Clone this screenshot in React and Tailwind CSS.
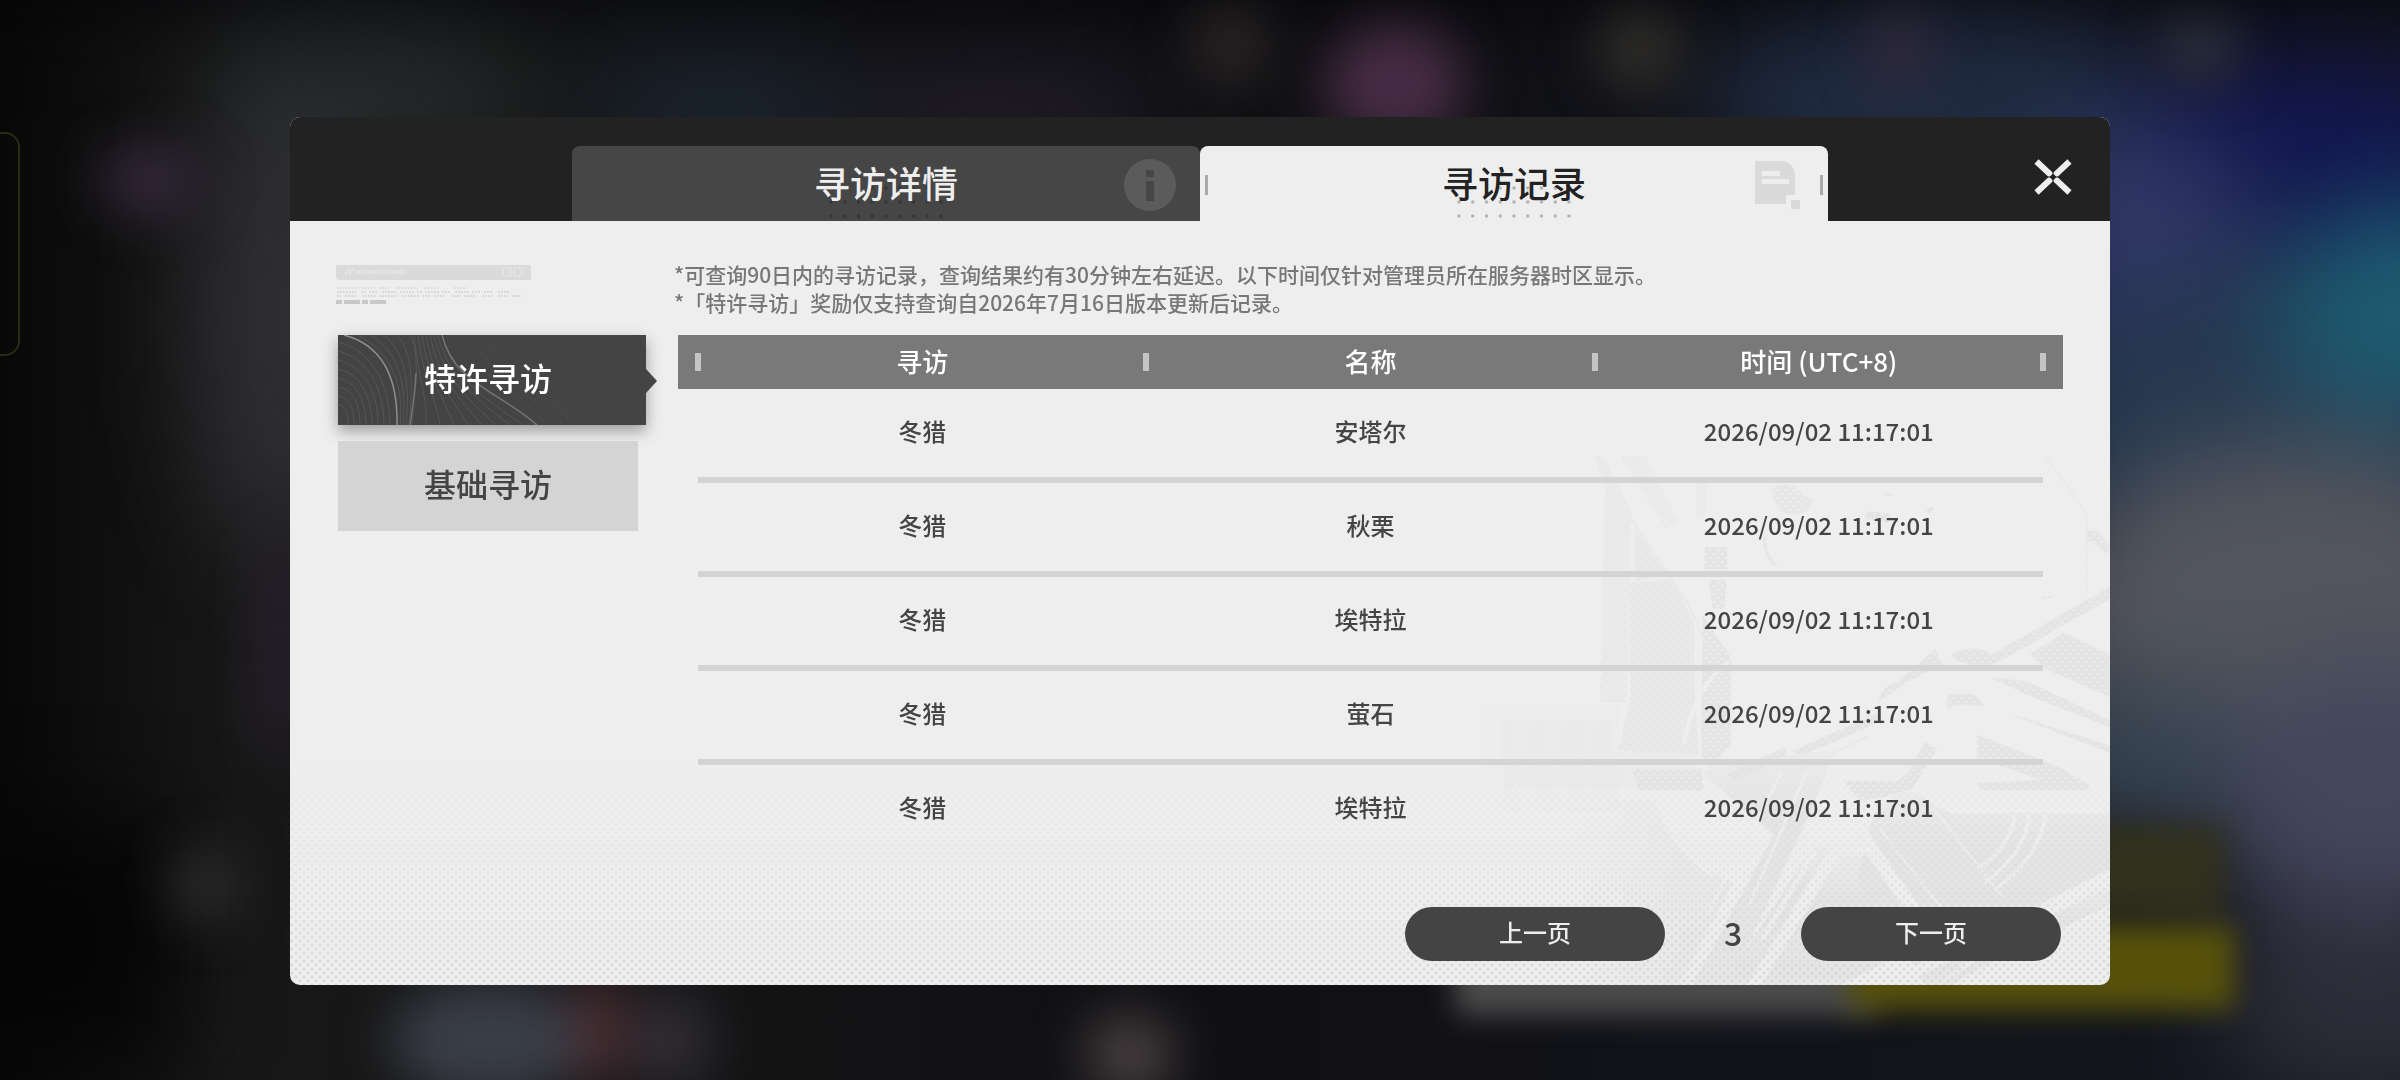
import React, { useState } from 'react';

const records = [
  { id: 1, banner: '冬猎', name: '安塔尔', time: '2026/09/02 11:17:01' },
  { id: 2, banner: '冬猎', name: '秋栗', time: '2026/09/02 11:17:01' },
  { id: 3, banner: '冬猎', name: '埃特拉', time: '2026/09/02 11:17:01' },
  { id: 4, banner: '冬猎', name: '萤石', time: '2026/09/02 11:17:01' },
  { id: 5, banner: '冬猎', name: '埃特拉', time: '2026/09/02 11:17:01' },
];

const columns = ['寻访', '名称', '时间 (UTC+8)'];

// blurred scene behind the dialog, each entry is cx, cy, rx, ry, color
const wideLights = [
  [370, 95, 160, 80, '#232828'],
  [285, 320, 90, 240, '#2e2e33'],
  [720, 110, 140, 60, '#1a242e'],
  [1000, 120, 160, 50, '#221d2a'],
  [1940, 100, 240, 90, '#202c42'],
  [2290, 150, 200, 90, '#121650'],
  [2140, 240, 120, 120, '#2f3663'],
  [2250, 420, 220, 140, '#26384f'],
  [2410, 310, 140, 110, '#1d5a70'],
  [2300, 610, 260, 170, '#52555d'],
  [2150, 760, 120, 80, '#364350'],
  [2370, 800, 150, 140, '#44475c'],
  [2370, 1000, 150, 100, '#2c2d39'],
];

const smallLights = [
  [150, 180, 50, 34, '#34293c'],
  [1230, 45, 40, 40, '#2a2525'],
  [1395, 85, 70, 60, '#472c45'],
  [1640, 50, 44, 40, '#302e2a'],
  [1900, 50, 30, 40, '#33293a'],
  [2200, 50, 40, 30, '#30333c'],
  [280, 650, 14, 110, '#33263b'],
  [205, 885, 30, 36, '#303030'],
  [490, 1040, 100, 60, '#3a3e48'],
  [600, 1030, 24, 60, '#4c2c30'],
  [670, 1040, 40, 50, '#312e35'],
  [1130, 1055, 44, 40, '#4a4244'],
];

const Backdrop = () => (
  <svg
    className="absolute inset-0 h-full w-full"
    viewBox="0 0 2400 1080"
    preserveAspectRatio="none"
    aria-hidden="true"
  >
    <defs>
      <filter id="wide" x="-20%" y="-20%" width="140%" height="140%" colorInterpolationFilters="sRGB">
        <feGaussianBlur stdDeviation="48" />
      </filter>
      <filter id="haze" x="-20%" y="-20%" width="140%" height="140%" colorInterpolationFilters="sRGB">
        <feGaussianBlur stdDeviation="26" />
      </filter>
      <filter id="glow" x="-20%" y="-60%" width="140%" height="220%" colorInterpolationFilters="sRGB">
        <feGaussianBlur stdDeviation="14" />
      </filter>
      <linearGradient id="night" x1="0" x2="1" y1="0" y2="0">
        <stop offset="0" stopColor="#080808" />
        <stop offset="0.1" stopColor="#181818" />
        <stop offset="0.5" stopColor="#101013" />
        <stop offset="1" stopColor="#141720" />
      </linearGradient>
    </defs>
    <rect width="2400" height="1080" fill="url(#night)" />
    <g filter="url(#wide)">
      <rect x="-100" y="820" width="270" height="240" fill="#050505" />
      {wideLights.map(([cx, cy, rx, ry, color]) => (
        <ellipse key={`${cx}-${cy}`} cx={cx} cy={cy} rx={rx} ry={ry} fill={color} />
      ))}
      <rect x="-200" y="-100" width="2800" height="100" fill="#040407" />
    </g>
    <g filter="url(#haze)">
      {smallLights.map(([cx, cy, rx, ry, color]) => (
        <ellipse key={`${cx}-${cy}`} cx={cx} cy={cy} rx={rx} ry={ry} fill={color} />
      ))}
    </g>
    <rect x="1455" y="950" width="420" height="65" fill="#4c4c4c" filter="url(#glow)" />
    <rect x="2080" y="825" width="145" height="90" fill="#32311e" filter="url(#glow)" />
    <rect x="1850" y="925" width="385" height="85" fill="#57520b" filter="url(#glow)" />
    <rect x="-60" y="133" width="79" height="222" rx="14" fill="none" stroke="#2b2a14" strokeWidth="2" />
  </svg>
);

const InfoIcon = () => (
  <svg width="52" height="52" viewBox="0 0 52 52" aria-hidden="true">
    <circle cx="26" cy="26" r="26" fill="#5b5b5b" />
    <path d="M22 11h8v7h-8zM22 22h8v20h-8z" fill="#464646" />
  </svg>
);

const RecordIcon = () => (
  <svg width="49" height="50" viewBox="0 0 49 50" aria-hidden="true">
    <path d="M0 2h26a14 14 0 0 1 14 14v20h-9v9H0z" fill="#dadada" />
    <path d="M7 12h18v5H7zM7 20h27v5H7z" fill="#ededed" />
    <path d="M36 41h9v9h-9z" fill="#dadada" />
  </svg>
);

const CloseIcon = () => (
  <svg width="38" height="36" viewBox="0 0 38 36" aria-hidden="true">
    <path d="M2.500 2.500L35.500 33.500M35.500 2.500L2.500 33.500" stroke="#eee" strokeWidth="6" fill="none" />
    <path d="M19 14.500l3.500 3.500-3.500 3.500-3.500-3.500z" fill="#222" />
    <path d="M19 11.500v4M19 20.500v4M12.500 18h4M21.500 18h4" stroke="#222" strokeWidth="1" />
  </svg>
);

const TabDots = ({ color }) => (
  <svg className="absolute bottom-0 left-1/2 -translate-x-1/2" width="114" height="36" viewBox="0 0 114 36" aria-hidden="true">
    {[3, 17, 31].map((y, row) =>
      Array.from({ length: 9 }, (_, i) =>
        row === 0 && (i < 2 || i > 7) ? null : (
          <circle key={`${i}-${y}`} cx={2 + i * 13.75} cy={y} r="1.8" fill={color} />
        )
      )
    )}
  </svg>
);

const Ornament = () => (
  <svg width="196" height="40" viewBox="0 0 196 40" aria-hidden="true">
    <path d="M0 0h193a2 2 0 0 1 2 2v11a2 2 0 0 1-2 2H2l-2-2z" fill="#dadada" />
    <path d="M9 10l4-6M13 10l4-6" stroke="#e6e6e6" strokeWidth="1.500" />
    <path d="M20 5h6v4h-6zM28 5h16v4H28zM46 5h6v4h-6zM54 5h16v4H54z" fill="#e2e2e2" />
    <path d="M167 3h8v8h-8zM178 3h8v8h-8z" fill="none" stroke="#e3e3e3" strokeWidth="1.500" />
    <path d="M170 6h2v2h-2z" fill="#e6e6e6" />
    <g stroke="#d9d9d9" strokeWidth="2">
      <path d="M1 23h22M26 23h13M43 23h10M60 23h22M88 23h13M118 23h13" strokeDasharray="1.500 1.500" />
      <path d="M1 27h19M26 27h4M33 27h9M46 27h14M64 27h14M81 27h5M89 27h14M106 27h8M119 27h14M136 27h8M148 27h9M162 27h12" strokeDasharray="2 1" />
      <path d="M1 31h4M9 31h12M26 31h14M43 31h19M66 31h17M86 31h8M98 31h12M116 31h8M128 31h12M146 31h12M162 31h10M176 31h10" strokeDasharray="2 1" />
    </g>
    <path d="M0 35h6v4H0zM8 35h16v4H8zM26 35h6v4h-6zM34 35h16v4H34z" fill="#c8c8c8" />
  </svg>
);

const ContourLines = () => (
  <svg className="absolute inset-y-0 left-0 h-full" width="240" height="90" viewBox="0 0 240 90" aria-hidden="true">
    <g fill="none" stroke="#565656" strokeWidth="1">
      {[0, 1, 2, 3, 4, 5, 6, 7].map((i) => (
        <path key={i} d={`M0 ${7 + i * 9}C${30 - i * 3} ${14 + i * 8} ${52 - i * 6} ${45 + i * 5} ${52 - i * 6} 90`} />
      ))}
      {[0, 1, 2, 3, 4].map((i) => (
        <path key={i} d={`M${20 + i * 13} 0C${54 + i * 7} 18 ${66 + i * 3} 50 ${62 + i * 3} 90`} />
      ))}
      {[0, 1, 2, 3, 4, 5, 6, 7].map((i) => (
        <path key={i} d={`M${76 + i * 4} 0C${80 + i * 5} 42 ${90 + i * 8} 64 ${88 + i * 14} 90`} />
      ))}
      {[0, 1, 2, 3].map((i) => (
        <path key={i} d={`M${118 + i * 14} 0C${136 + i * 16} 42 ${190 + i * 10} 60 ${208 + i * 8} 90`} stroke="#4b4b4b" />
      ))}
    </g>
    <path d="M6 0C44 10 60 42 59 90" fill="none" stroke="#8e8e8e" strokeWidth="1.500" />
    <path d="M78 38C77 60 74 76 72 90" fill="none" stroke="#747474" strokeWidth="1.500" />
    <path d="M104 0C116 48 160 56 199 90" fill="none" stroke="#747474" strokeWidth="1.500" />
  </svg>
);

// faint halftone machine in the lower right corner
const MachineArt = () => (
  <svg
    className="absolute right-0 bottom-0 h-[545px] w-[630px]"
    viewBox="0 0 1543 1526"
    preserveAspectRatio="none"
    aria-hidden="true"
  >
    <defs>
      <pattern id="halftone" width="19.600" height="22.400" patternUnits="userSpaceOnUse">
        <rect width="19.600" height="22.400" fill="#e4e4e4" />
        <circle cx="5" cy="6" r="3.500" fill="#eeeeee" />
        <circle cx="15" cy="17" r="3.500" fill="#eeeeee" />
      </pattern>
      <linearGradient id="fadeLeft" x1="0" x2="1">
        <stop offset="0" stopColor="#e9e9e9" stopOpacity="0" />
        <stop offset="1" stopColor="#e9e9e9" />
      </linearGradient>
      <linearGradient id="floorLeft" x1="0" x2="1" y1="0" y2="0">
        <stop offset="0" stopColor="#e6e6e6" stopOpacity="0" />
        <stop offset="0.700" stopColor="#e6e6e6" />
      </linearGradient>
      <linearGradient id="floor" x1="0" x2="0" y1="0" y2="1">
        <stop offset="0" stopColor="#e4e4e4" stopOpacity="0.200" />
        <stop offset="0.300" stopColor="#e4e4e4" />
        <stop offset="1" stopColor="#e6e6e6" />
      </linearGradient>
    </defs>
    <g fill="url(#halftone)">
      <g opacity="0.700">
        <path d="M280 45h20l70 150-10 540h-66l12-600z" opacity="0.700" />
        <path d="M345 45h60l80 180-28 25zM530 120h22v95h-22z" opacity="0.600" />
        <path d="M380 250l80 130-80 15z" />
        <path d="M365 400l105-10 54 120 14 370-200-10 30-150z" />
        <path d="M50 785h280v90h200v105H60z" opacity="0.300" />
      </g>
      <path d="M550 300h56v62h-56zM560 392h44l-6 80h-28z" />
      <path d="M545 490l70 120v240l-50 70-24-40z" />
      <path d="M715 135q50-30 75 20l25 10q-10 50-60 45-40-20-40-75z" opacity="0.700" />
      <path d="M945 200l60 5-5 30-55-15zM1090 195l22-8-10 22zM990 150l25 2-20 6z" />
      <path d="M700 270q0 50 30 85l-15-5q-25-40-20-80z" />
      <path d="M370 920l178 0v62H390z" />
      <path d="M1485 250l30 5 28 45-8 18-48-40zM1370 440l40-5-25 12z" />
      <path d="M605 935l140-75 8 25-130 72zM765 870l210-105 5 25-195 95zM975 735q10-50 50-60l90-90 18 45-85 45-60 50z" />
      <path d="M1150 605q50-40 105-5l288-190v35l-270 175q-60 30-123-15z" />
      <path d="M1345 600l85-60 113 60v120l-160-80z" />
      <path d="M1250 665l90 10 203 110v20l-190-85zM1280 760l263 95v22z" />
      <path d="M1145 710l65 0 28 36-60-6-33 12z" />
      <path d="M1218 825l200 90 78 55-10 10h-260l-10-20 160-8-158-60z" />
      <path d="M1050 930l40-85 30 20-60 110-70 25-60 10-40-55h130z" />
    </g>
    <path d="M240 1010h190q30 130 130 200l60 30-140 296H240z" fill="url(#floorLeft)" opacity="0.700" />
    <g fill="url(#floor)">
      <path d="M540 930q150-50 330-60l-60 170-200 486H520l200-420z" />
      <path d="M820 1130l35 15-200 381h-60z" />
      <path d="M885 1160h50l150 250-200 116H690z" />
      <path d="M960 1060l80-90 110 75h393v155l-190 110-230 216h-30l-170-290z" />
      <path d="M1400 1330l143-80v50l-320 180-70 46h-30z" />
    </g>
    <g fill="none" stroke="#eeeeee">
      <path d="M500 850q20-150 110-230M465 1010q30 130 125 190" strokeWidth="10" />
      <path d="M440 1010q30 140 130 210" strokeWidth="8" />
      <path d="M530 510q-10 200 20 460" strokeWidth="6" />
      <path d="M740 930L560 1320M800 930L660 1300" strokeWidth="8" />
      <path d="M1310 1050q-10 90-90 150M1345 1050q-10 110-110 190M1385 1050q-20 130-125 210" strokeWidth="10" />
      <path d="M980 1090l150 220M1110 1030l170 250" strokeWidth="5" />
      <path d="M820 1150L690 1400" strokeWidth="14" />
      <path d="M930 1100l190 310" strokeWidth="36" />
      <path d="M1543 1225L1000 1526" strokeWidth="30" />
    </g>
    <path d="M1385 45l100 160v225" fill="none" stroke="#e7e7e7" strokeWidth="3" strokeDasharray="40 8" />
    <path d="M370 220l140 240 80 200M950 830L720 960" fill="none" stroke="#e7e7e7" strokeWidth="4" />
    <rect x="0" y="740" width="340" height="300" fill="url(#fadeLeft)" opacity="0.200" />
  </svg>
);

const Tab = ({ label, active, onClick, icon }) => (
  <button
    type="button"
    role="tab"
    aria-selected={active}
    onClick={onClick}
    className={`relative flex h-[75px] items-center justify-center rounded-t-lg pb-1 text-4xl font-medium ${
      active ? 'bg-[#eee] text-[#222]' : 'bg-[#464646] text-[#eee]'
    }`}
  >
    <TabDots color={active ? '#b4b4b4' : '#363636'} />
    <span className="relative">{label}</span>
    <span className="absolute right-6 top-[13px]">{icon}</span>
    {active && (
      <>
        <span className="absolute left-[5px] top-[29px] h-5 w-[3px] bg-[#a8a8a8]" />
        <span className="absolute right-[5px] top-[29px] h-5 w-[3px] bg-[#a8a8a8]" />
      </>
    )}
  </button>
);

const BannerButton = ({ label, active, onClick }) => (
  <button
    type="button"
    onClick={onClick}
    className={`relative flex h-[90px] items-center pb-1.5 text-[32px] font-medium ${
      active
        ? 'w-[308px] bg-[#444] text-white shadow-[0_6px_14px_rgba(0,0,0,0.35)]'
        : 'w-[300px] bg-[#d4d4d4] text-[#444]'
    }`}
  >
    {active && <ContourLines />}
    <span className="relative w-[300px] text-center">{label}</span>
    {active && (
      <svg className="absolute left-full top-[34px]" width="12" height="24" viewBox="0 0 12 24" aria-hidden="true">
        <path d="M0 0l11 12L0 24z" fill="#444" />
      </svg>
    )}
  </button>
);

const PageButton = ({ label, onClick }) => (
  <button type="button" onClick={onClick} className="h-[54px] w-[260px] rounded-full bg-[#444] pb-1 text-2xl font-medium text-[#eee]">
    {label}
  </button>
);

const App = () => {
  const [tab, setTab] = useState('records');
  const [banner, setBanner] = useState('special');
  const [page, setPage] = useState(3);

  return (
    <div className="relative flex min-h-screen justify-center overflow-hidden bg-[#0c0c0e] px-6 pt-[117px] pb-[95px] font-['Noto_Sans_CJK_SC','Noto_Sans',sans-serif]">
      <Backdrop />

      <section role="dialog" aria-label="寻访记录" className="relative w-full max-w-[1820px] self-start overflow-hidden rounded-[10px] bg-[#eee]">
        <header className="grid h-[104px] grid-cols-[282px_1fr_1fr_282px] items-end bg-[#222]">
          <div role="tablist" className="col-span-2 col-start-2 grid grid-cols-2">
            <Tab label="寻访详情" active={tab === 'details'} onClick={() => setTab('details')} icon={<InfoIcon />} />
            <Tab label="寻访记录" active={tab === 'records'} onClick={() => setTab('records')} icon={<RecordIcon />} />
          </div>
          <button type="button" aria-label="关闭" className="mr-[38px] mb-[26px] justify-self-end">
            <CloseIcon />
          </button>
        </header>

        <div className="relative">
          <MachineArt />
          <div className="absolute inset-x-0 bottom-0 h-[230px] bg-[radial-gradient(circle_at_2px_2px,#d8d8d8_1px,transparent_2px),radial-gradient(circle_at_6px_6px,#d8d8d8_1px,transparent_2px)] bg-[length:8px_8px] [mask-image:linear-gradient(to_bottom,transparent,black)]" />

          <div className="relative flex gap-9 pr-[47px] pb-6 pl-[46px]">
            <aside className="w-[302px] shrink-0 pt-11">
              <Ornament />
              <nav className="mt-[30px] flex flex-col gap-4 pl-0.5">
                <BannerButton label="特许寻访" active={banner === 'special'} onClick={() => setBanner('special')} />
                <BannerButton label="基础寻访" active={banner === 'basic'} onClick={() => setBanner('basic')} />
              </nav>
            </aside>

            <main className="min-w-0 flex-1 pt-[39px]">
              <div className="text-[21px] leading-7 font-medium text-[#777]">
                <p>*可查询90日内的寻访记录，查询结果约有30分钟左右延迟。以下时间仅针对管理员所在服务器时区显示。</p>
                <p>*「特许寻访」奖励仅支持查询自2026年7月16日版本更新后记录。</p>
              </div>

              <div className="mt-[19px] ml-1 bg-[linear-gradient(#797979,#797979)] bg-[length:100%_54px] bg-no-repeat px-5">
                <table className="w-full table-fixed border-separate border-spacing-0 text-center">
                  <thead>
                    <tr className="h-[54px] text-[26px] text-white">
                      {columns.map((column) => (
                        <th
                          key={column}
                          scope="col"
                          className="relative p-0 pb-1 font-medium before:absolute before:top-[18px] before:-left-[3px] before:h-[18px] before:w-[6px] before:bg-[#c4c4c4] last:after:absolute last:after:top-[18px] last:after:-right-[3px] last:after:h-[18px] last:after:w-[6px] last:after:bg-[#c4c4c4]"
                        >
                          {column}
                        </th>
                      ))}
                    </tr>
                  </thead>
                  <tbody className="text-2xl font-medium text-[#444] [&_td]:border-[#d4d4d4] [&_td]:p-0 [&_td]:pb-1">
                    {records.map((record) => (
                      <tr key={record.id} className="h-[94px] last:h-[88px] [&:not(:last-child)>td]:border-b-[6px]">
                        <td>{record.banner}</td>
                        <td>{record.name}</td>
                        <td>{record.time}</td>
                      </tr>
                    ))}
                  </tbody>
                </table>
              </div>

              <footer className="mt-[54px] flex items-center justify-end pr-0.5">
                <PageButton label="上一页" onClick={() => setPage(Math.max(1, page - 1))} />
                <span className="w-[136px] pb-1 text-center text-[32px] leading-[50px] font-medium text-[#444]">{page}</span>
                <PageButton label="下一页" onClick={() => setPage(page + 1)} />
              </footer>
            </main>
          </div>
        </div>
      </section>
    </div>
  );
};

export default App;
